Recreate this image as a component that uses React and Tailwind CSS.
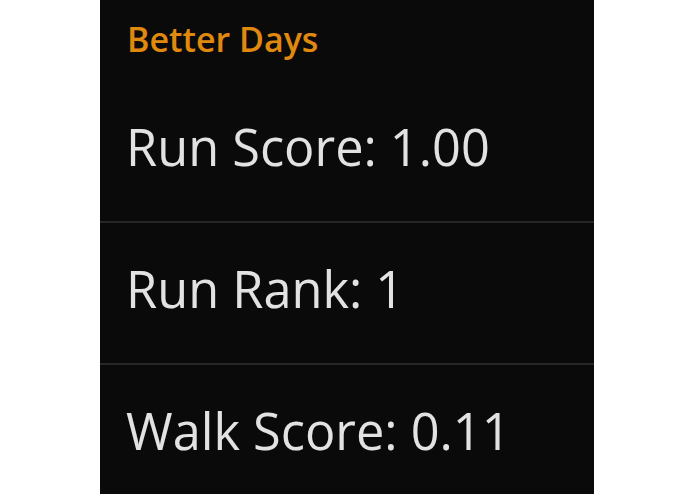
import React from 'react';

const rows = ['Run Score: 1.00', 'Run Rank: 1', 'Walk Score: 0.11'];

export default function App() {
  return (
    <div className="h-[494px] w-[695px] overflow-hidden bg-white pl-[100px]" style={{ fontFamily: '"Open Sans", sans-serif' }}>
      <div className="w-[494px] h-full bg-[#0a0a0a] flex flex-col">
        <div className="h-[79px] shrink-0 pt-[22px] pl-[27px]">
          <h1 className="text-[34px] font-semibold text-[#e0890f] leading-none">Better Days</h1>
        </div>
        {rows.map((label, i) => (
          <div
            key={label}
            className={`h-[142px] shrink-0 pt-[41px] pl-[26px] border-t-2 ${i === 0 ? 'border-transparent' : 'border-[#272727]'}`}
          >
            <span className="block text-[50.5px] leading-none text-[#e2e2e2]">{label}</span>
          </div>
        ))}
      </div>
    </div>
  );
}
